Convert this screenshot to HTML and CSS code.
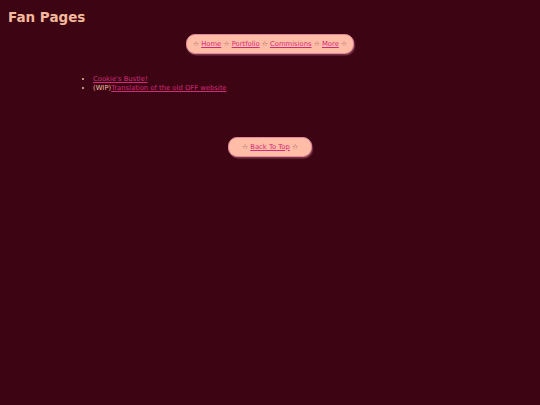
FILE: index.html
```html
<!DOCTYPE html>
<html>
<head>
<meta charset="utf-8">
<link rel="stylesheet" href="styles.css">
</head>
<body>
<h1 class="title">Fan Pages</h1>
<div class="nav-wrap">
  <nav class="pill">☆ <a href="#">Home</a> ☆ <a href="#">Portfolio</a> ☆ <a href="#">Commisions</a> ☆ <a href="#">More</a> ☆</nav>
</div>
<ul class="list">
  <li><a href="#">Cookie's Bustle!</a></li>
  <li>(WIP)<a href="#">Translation of the old OFF website</a></li>
</ul>
<div class="nav-wrap back">
  <div class="pill pill-wide">☆ <a href="#">Back To Top</a> ☆</div>
</div>
</body>
</html>
```
FILE: styles.css
```css
html, body {
  margin: 0;
  padding: 0;
  background: #3d0513;
  height: 100%;
}
body {
  font-family: "DejaVu Sans", sans-serif;
  font-size: 6.8px;
  color: #f3bfa5;
}
.title {
  margin: 0;
  padding: 9px 0 0 8px;
  font-size: 13.5px;
  font-weight: bold;
  color: #f5b89c;
  line-height: 16px;
}
.nav-wrap {
  display: flex;
  justify-content: center;
  margin-top: 9px;
}
.pill {
  background: #ffbca6;
  border: 1.5px solid #e0889a;
  border-radius: 9px;
  box-shadow: 1px 1.5px 1px #7a3446;
  padding: 4.5px 6px;
  line-height: 9px;
  color: #8e5a5a;
}
.pill-wide {
  padding: 4.5px 13px;
}
.pill a, .list a {
  color: #d12a78;
  text-decoration: underline;
}
.list {
  margin: 21px 0 0 0;
  padding: 0 0 0 93px;
  line-height: 9px;
}
.back {
  margin-top: 44px;
}
```
